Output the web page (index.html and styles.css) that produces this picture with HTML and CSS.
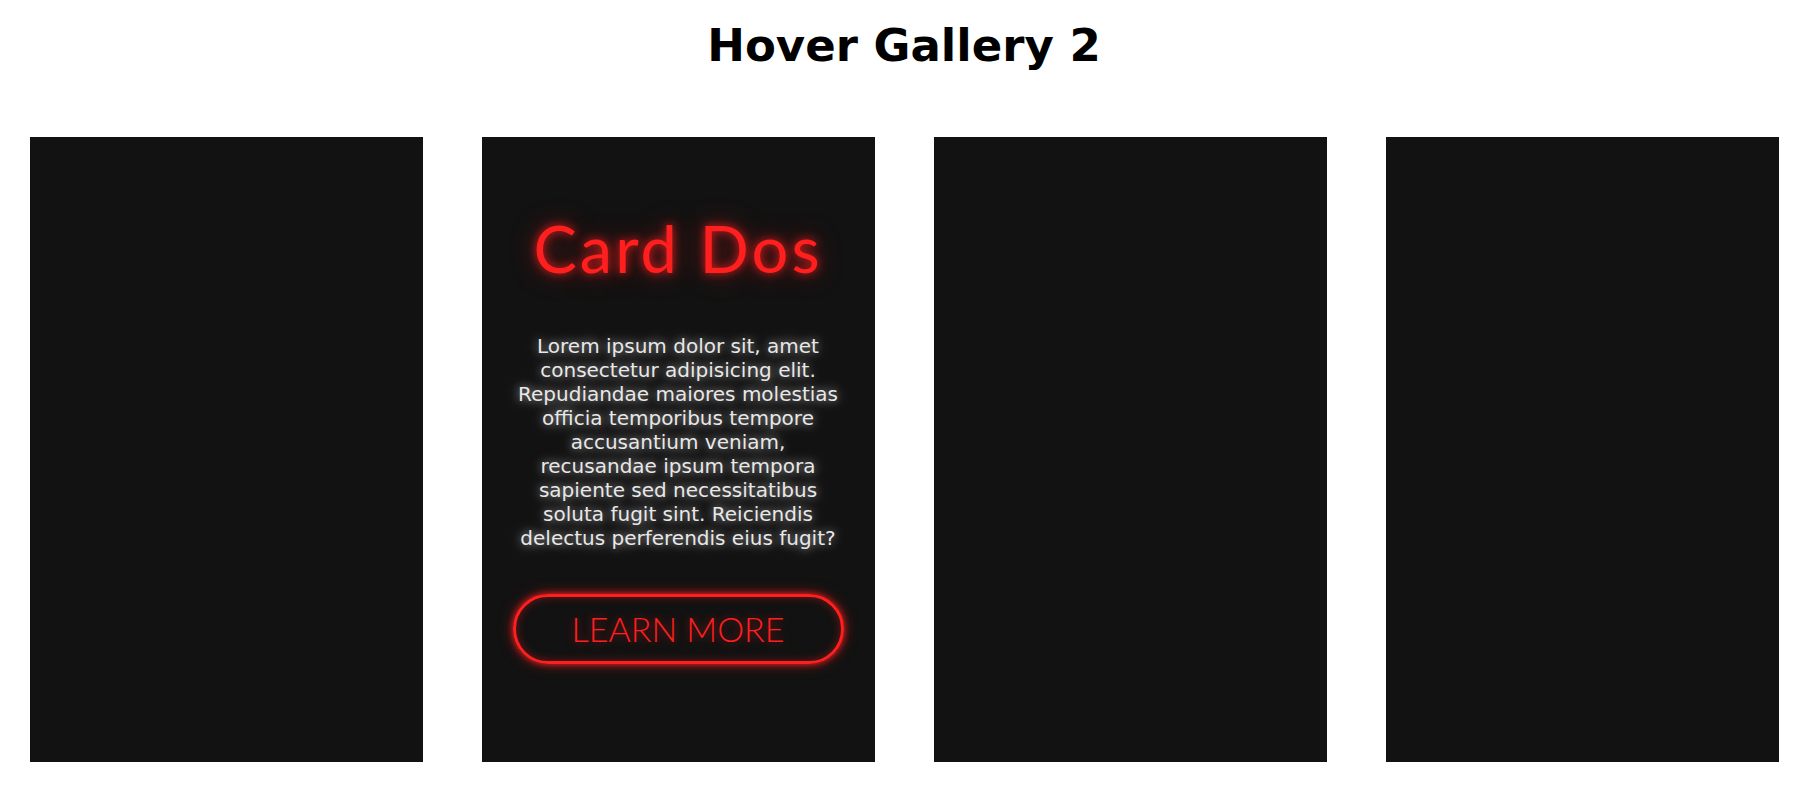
FILE: index.html
```html
<!DOCTYPE html>
<html lang="en">
<head>
<meta charset="utf-8">
<title>Hover Gallery 2</title>
<link rel="stylesheet" href="styles.css">
</head>
<body>
  <h1 class="page-title">Hover Gallery 2</h1>
  <div class="gallery">
    <div class="card"></div>
    <div class="card card-active">
      <h2 class="card-title">Card Dos</h2>
      <p class="card-text">Lorem ipsum dolor sit, amet consectetur adipisicing elit. Repudiandae maiores molestias officia temporibus tempore accusantium veniam, recusandae ipsum tempora sapiente sed necessitatibus soluta fugit sint. Reiciendis delectus perferendis eius fugit?</p>
      <a class="card-btn" href="#">LEARN MORE</a>
    </div>
    <div class="card"></div>
    <div class="card"></div>
  </div>
</body>
</html>
```

FILE: styles.css
```css
* {
  box-sizing: border-box;
}

body {
  margin: 0;
  background: #ffffff;
  font-family: "DejaVu Sans", Verdana, sans-serif;
}

.page-title {
  margin: 20px 0 0;
  text-align: center;
  font-size: 45px;
  font-weight: bold;
  line-height: 52px;
  color: #000;
}

.gallery {
  display: flex;
  justify-content: space-around;
  margin-top: 65px;
}

.card {
  width: 393px;
  height: 625px;
  background: #121212;
}

.card-active {
  display: flex;
  flex-direction: column;
  align-items: center;
  padding: 69px 30px 0;
}

.card-title {
  margin: 0;
  font-family: Lato, "Noto Sans", sans-serif;
  font-weight: 400;
  font-size: 65px;
  letter-spacing: 3px;
  line-height: 1.3;
  color: #ff1f1f;
  text-shadow: 0 0 10px rgba(255, 30, 30, 0.9), 0 0 25px rgba(255, 30, 30, 0.5);
}

.card-text {
  margin: 43px 0 0;
  font-family: "DejaVu Sans", Verdana, sans-serif;
  font-size: 20px;
  line-height: 24px;
  text-align: center;
  color: #e8e8e8;
  text-shadow: 0 0 8px rgba(255, 255, 255, 0.5), 0 0 18px rgba(255, 255, 255, 0.35), 0 0 30px rgba(255, 255, 255, 0.2);
}

.card-btn {
  margin-top: 44px;
  width: 331px;
  height: 70px;
  display: flex;
  align-items: center;
  justify-content: center;
  border: 3px solid #ff1f1f;
  border-radius: 35px;
  font-family: Lato, "Noto Sans", sans-serif;
  font-weight: 300;
  font-size: 34px;
  color: #ff1f1f;
  text-decoration: none;
  box-shadow: 0 0 6px rgba(255, 30, 30, 0.9), 0 0 14px rgba(255, 30, 30, 0.5), inset 0 0 10px rgba(255, 30, 30, 0.4);
  text-shadow: 0 0 8px rgba(255, 30, 30, 0.5);
}
```
